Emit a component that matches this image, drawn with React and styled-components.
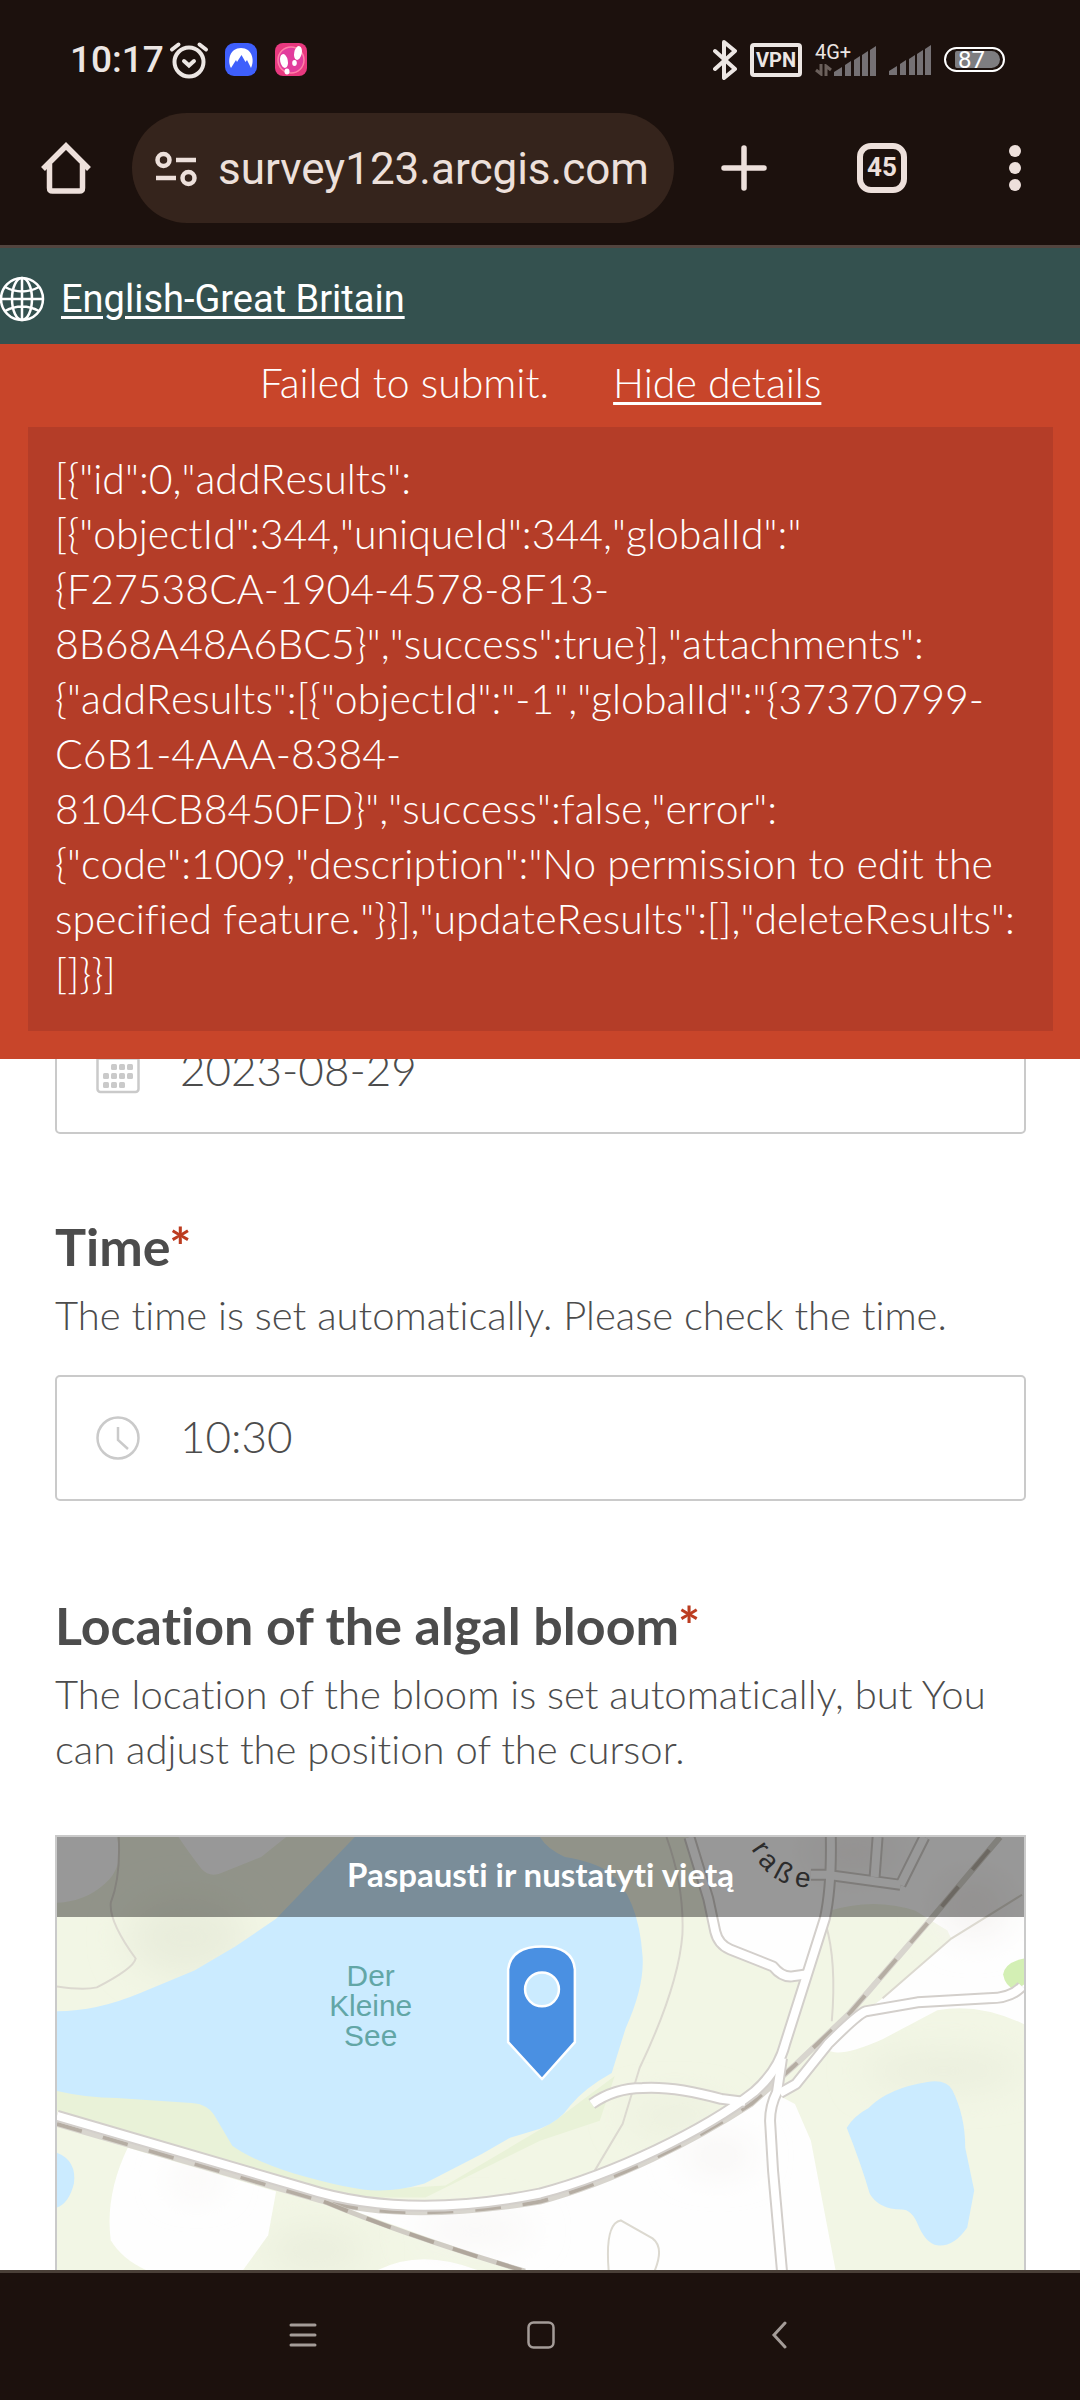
import React, { useState } from "react";
import styled, { createGlobalStyle } from "styled-components";

const colors = {
  chrome: "#1c110d",
  pill: "#35241c",
  chromeInk: "#ede0db",
  teal: "#34514f",
  error: "#c8452a",
  errorDark: "#b43d28",
  ink: "#4c4c4c",
  line: "#cacaca",
};

const GlobalStyle = createGlobalStyle`
  *, *::before, *::after { box-sizing: border-box; }
  body { margin: 0; background: #fff; }
  button { border: 0; padding: 0; background: none; color: inherit; font: inherit; cursor: pointer; }
`;

const Page = styled.div`
  display: flex;
  flex-direction: column;
  min-height: 100vh;
  color: ${colors.ink};
  font-family: Lato, "Open Sans", sans-serif;
  font-weight: 300;
  font-size: 40px;
  line-height: 55px;
  font-variant-ligatures: none;
`;

/* ---------- system and browser chrome ---------- */

const StatusBar = styled.header`
  display: flex;
  justify-content: space-between;
  align-items: center;
  height: 113px;
  padding: 6px 75px 0 70px;
  background: ${colors.chrome};
  color: #ece6e3;
  font-family: Roboto, sans-serif;
`;

const StatusGroup = styled.div`
  display: flex;
  align-items: center;
  gap: ${(p) => p.$gap}px;
`;

const Clock = styled.time`
  font-size: 37px;
  font-weight: 500;
  line-height: 40px;
`;

const VpnBadge = styled.span`
  width: 52px;
  height: 34px;
  border: 4px solid #ece6e3;
  border-radius: 4px;
  font-size: 20px;
  font-weight: 700;
  line-height: 27px;
  text-align: center;
`;

const Network = styled.div`
  display: flex;
  align-items: flex-end;
`;

const NetworkType = styled.div`
  display: flex;
  flex-direction: column;
  gap: 4px;
  width: 19px;
  font-size: 20px;
  font-weight: 400;
  line-height: 16px;
  white-space: nowrap;
`;

const Battery = styled.span`
  width: 61px;
  height: 25px;
  padding: 2px 3px 2px 9px;
  border: 2px solid #fff;
  border-radius: 13px;
`;

const BatteryLevel = styled.span`
  display: block;
  height: 17px;
  padding-left: 3px;
  border-radius: 2px 9px 9px 2px;
  background: #7e7d80;
  color: #fff;
  font-size: 24px;
  font-weight: 400;
  line-height: 18px;
`;

const Toolbar = styled.nav`
  display: flex;
  align-items: flex-start;
  height: 135px;
  border-bottom: 3px solid #52453f;
  background: ${colors.chrome};
  color: ${colors.chromeInk};
  font-family: Roboto, sans-serif;
`;

const ToolButton = styled.button`
  display: flex;
  flex: none;
  align-items: center;
  justify-content: center;
  width: ${(p) => p.$width}px;
  height: 110px;
`;

const AddressPill = styled.div`
  display: flex;
  flex: 1;
  align-items: center;
  gap: 21px;
  min-width: 0;
  height: 110px;
  padding: 2px 16px 0 23px;
  border-radius: 55px;
  background: ${colors.pill};
`;

const AddressInput = styled.input`
  flex: 1;
  min-width: 0;
  height: 60px;
  padding: 0;
  border: 0;
  outline: 0;
  background: none;
  color: ${colors.chromeInk};
  font-family: Roboto, sans-serif;
  font-size: 44px;
`;

const TabCount = styled.span`
  width: 50px;
  height: 50px;
  border: 6px solid ${colors.chromeInk};
  border-radius: 14px;
  font-size: 26px;
  font-weight: 700;
  line-height: 37px;
  text-align: center;
`;

const NavBar = styled.nav`
  display: grid;
  grid-template-columns: repeat(3, 1fr);
  height: 130px;
  padding: 0 182px 4px 184px;
  border-top: 3px solid #4a4038;
  background: ${colors.chrome};
  color: #a49c98;
`;

const NavButton = styled.button`
  display: flex;
  align-items: center;
  justify-content: center;
`;

/* ---------- survey page ---------- */

const LanguageBar = styled.div`
  display: flex;
  align-items: center;
  gap: 16px;
  height: 96px;
  padding-top: 6px;
  background: ${colors.teal};
  color: #fff;
`;

const LanguageLink = styled.a`
  color: #fff;
  font-family: Roboto, sans-serif;
  font-size: 38px;
  font-weight: 400;
  line-height: 48px;
  text-underline-offset: 4px;
`;

const ErrorBanner = styled.section`
  padding: 0 27px 28px 28px;
  background: ${colors.error};
  color: #fff;
  font-size: 41px;
`;

const ErrorHeader = styled.div`
  display: flex;
  justify-content: center;
  gap: 64px;
  padding: 11px 0 17px;
`;

const DetailsToggle = styled.button`
  text-decoration: underline;
  text-decoration-thickness: 3px;
  text-underline-offset: 4px;
`;

const ErrorDetails = styled.div`
  padding: 24px 27px 30px;
  background: ${colors.errorDark};
  font-kerning: none;
  white-space: pre-line;
`;

const Form = styled.form`
  display: flex;
  flex: 1;
  flex-direction: column;
  padding: 0 54px 0 55px;
`;

const ScrolledField = styled.div`
  display: flex;
  flex-direction: column;
  justify-content: flex-end;
  height: 75px;
  overflow: hidden;
`;

const Field = styled.div`
  display: flex;
  flex: none;
  align-items: center;
  gap: 40px;
  height: 126px;
  padding: 0 39px;
  border: 2px solid ${colors.line};
  border-radius: 5px;
`;

const FieldInput = styled.input`
  flex: 1;
  min-width: 0;
  height: 60px;
  padding: 0 0 4px;
  border: 0;
  outline: 0;
  background: none;
  color: ${colors.ink};
  font-family: inherit;
  font-size: 44px;
  font-weight: 300;
`;

const Question = styled.section`
  display: flex;
  flex-direction: column;
  padding-top: ${(p) => p.$top}px;
  ${(p) => p.$fill && "flex: 1;"}
`;

const QuestionLabel = styled.label`
  margin: 0;
  font-size: 52px;
  font-weight: 700;
  line-height: 60px;
`;

const Required = styled.span`
  color: #bc3c20;
`;

const Hint = styled.p`
  margin: 12px 0 ${(p) => p.$bottom}px;
  white-space: pre-line;
`;

const MapFrame = styled.div`
  position: relative;
  flex: 1;
  min-height: 435px;
  border: 2px solid ${colors.line};
  border-bottom: 0;
  overflow: hidden;
`;

const MapDrawing = styled.svg`
  position: absolute;
  inset: 0;
  width: 100%;
  height: 100%;
`;

const MapPrompt = styled.button`
  position: absolute;
  inset: -2px -2px auto;
  height: 82px;
  padding-bottom: 4px;
  background: rgba(0, 0, 0, 0.4);
  color: #fff;
  font-size: 33px;
  font-weight: 700;
`;

/* ---------- drawings ---------- */

const AlarmIcon = () => (
  <svg width="40" height="38" viewBox="0 0 40 38" fill="none" stroke="#ece6e3" strokeWidth="4" strokeLinecap="round">
    <circle cx="20" cy="21" r="14.5" />
    <path d="M15 20l5 4.500 5-4.500M3 8.500L9.500 3.500M37 8.500L30.500 3.500" />
  </svg>
);

const NordIcon = () => (
  <svg width="32" height="33" viewBox="0 0 32 33">
    <rect width="32" height="33" rx="9" fill="#3e5ffc" />
    <path d="M6 25C2 17 5 5 16 5s14 12 10 20l-4-8-1.500 2-4-7-4.500 7-1-2z" fill="#fff" />
  </svg>
);

const StepsIcon = () => (
  <svg width="32" height="33" viewBox="0 0 32 33">
    <rect width="32" height="33" rx="8" fill="#e8397f" />
    <circle cx="16" cy="17" r="13" fill="#e23c9c" stroke="#ff7fa8" strokeWidth="1.500" />
    <g fill="#fff">
      <ellipse cx="9" cy="18" rx="3.800" ry="7" transform="rotate(-12 9 18)" />
      <ellipse cx="12" cy="28.500" rx="2.500" ry="3" />
      <ellipse cx="23" cy="10" rx="3.800" ry="7" transform="rotate(12 23 10)" />
      <ellipse cx="19.500" cy="20" rx="2.300" ry="3" />
    </g>
  </svg>
);

const BluetoothIcon = () => (
  <svg width="24" height="40" viewBox="0 0 24 40" fill="none" stroke="#ece6e3" strokeWidth="4" strokeLinecap="round" strokeLinejoin="round">
    <path d="M2 11l20 18-11 9V2l11 9L2 29" />
  </svg>
);

const TransferIcon = () => (
  <svg width="17" height="12" viewBox="0 0 17 12" fill="none" stroke="#6b605b" strokeWidth="3">
    <path d="M6 0v10L1 6M11 12V2l5 4" />
  </svg>
);

const SignalIcon = () => (
  <svg width="42" height="30" viewBox="0 0 42 30" fill="#757174">
    <path d="M0 30v-4l8-5v9zM11 30V19l6-4v15zM20 30V14l6-4v20zM28 30V9l6-4v25zM36 30V4l6-4v30z" />
  </svg>
);

const HomeIcon = () => (
  <svg width="50" height="52" viewBox="0 0 50 52" fill="none" stroke={colors.chromeInk} strokeWidth="5.500" strokeLinejoin="round">
    <path d="M2 27L25 4l23 23" strokeLinejoin="miter" />
    <path d="M8.500 22v24q0 3 3 3h27q3 0 3-3V22" />
  </svg>
);

const SiteInfoIcon = () => (
  <svg width="42" height="36" viewBox="0 0 42 36" fill="none" stroke={colors.chromeInk} strokeWidth="4.500">
    <circle cx="8.500" cy="9" r="6" />
    <circle cx="33.500" cy="27" r="6" />
    <path d="M21 9h20M1 27h20" />
  </svg>
);

const PlusIcon = () => (
  <svg width="46" height="46" viewBox="0 0 46 46" stroke={colors.chromeInk} strokeWidth="5.500" strokeLinecap="round">
    <path d="M23 3v40M3 23h40" />
  </svg>
);

const DotsIcon = () => (
  <svg width="12" height="46" viewBox="0 0 12 46" fill={colors.chromeInk}>
    <circle cx="6" cy="6" r="6" />
    <circle cx="6" cy="23" r="6" />
    <circle cx="6" cy="40" r="6" />
  </svg>
);

const GlobeIcon = () => (
  <svg width="45" height="46" viewBox="0 0 45 46" fill="none" stroke="#fff" strokeWidth="2.500">
    <circle cx="22" cy="23" r="21" />
    <ellipse cx="22" cy="23" rx="10" ry="21" />
    <path d="M22 2v42M1 23h42M5 11q17 9 34 0M5 35q17-9 34 0" />
  </svg>
);

const CalendarIcon = () => (
  <svg width="44" height="46" viewBox="0 0 44 46" fill="none" stroke={colors.line} strokeWidth="2.500">
    <rect x="1.500" y="3" width="41" height="41" rx="3" />
    <path d="M1 10.500h42" />
    <g fill={colors.line} stroke="none">
      {[[15, 16], [23, 16], [31, 16], [7, 25], [15, 25], [23, 25], [31, 25], [7, 34], [15, 34], [23, 34]].map(([x, y]) => (
        <rect key={`${x}-${y}`} x={x} y={y} width="6" height="6" rx="1.500" />
      ))}
    </g>
  </svg>
);

const ClockIcon = () => (
  <svg width="44" height="44" viewBox="0 0 44 44" fill="none" stroke={colors.line} strokeWidth="2.500">
    <circle cx="22" cy="22" r="20.500" />
    <path d="M22 11v13l10 9" />
  </svg>
);

const roads = [
  "M757 38L774 38L847 48M821 40L824 0M847 48L871 0",
  "M635 0L654 62L661 95Q664 108 676 113L719 130Q728 141 738 140L752 138",
  "M537 268Q560 252 588 252Q620 250 667 263L691 266",
  "M969 150Q958 162 935 162L864 166L812 175Q804 178 774 208L742 248L726 257",
  "M0 280L250 353Q350 385 485 358C560 338 650 295 700 256Q724 235 731 208L771 82Q778 50 777 0",
  "M728 222L723 256Q716 270 716 285L719 335L728 436",
];

const lines = [
  "M62 0Q64 40 54 66Q52 85 79 122Q77 132 40 151Q26 154 0 150",
  "M612 0Q630 50 628 98Q624 150 585 232L568 288L540 335",
  "M772 88Q783 125 778 185",
  "M969 58L898 102L829 162",
  "M554 436Q550 388 566 385L598 403Q610 412 600 436",
];

const railway =
  "M0 288L265 365Q350 388 485 366C560 346 640 305 697 268L740 230L795 178L878 82L947 0";

const BaseMap = () => (
  <MapDrawing viewBox="0 0 971 435" preserveAspectRatio="xMidYMin slice" role="img" aria-label="Map">
    <defs>
      <filter id="shade" x="-50%" y="-50%" width="200%" height="200%">
        <feGaussianBlur stdDeviation="18" />
      </filter>
    </defs>
    <rect width="971" height="435" fill="#f2f6e5" />
    <g fill="#e9eddc" filter="url(#shade)">
      <ellipse cx="130" cy="100" rx="60" ry="40" />
      <ellipse cx="890" cy="235" rx="80" ry="16" />
      <ellipse cx="260" cy="415" rx="50" ry="20" />
      <ellipse cx="620" cy="280" rx="50" ry="12" />
    </g>
    <g fill="#fefefe">
      <path d="M0 0H60Q68 30 48 47Q28 65 0 66Z" />
      <path d="M122 0Q132 15 145 32Q154 42 168 35L205 20L230 0Z" />
      <path d="M71 312Q48 360 54 405Q66 425 92 436H186L212 400L220 356Z" />
      <path d="M320 436Q365 412 425 436Z" />
      <path d="M272 366Q370 386 485 363C580 335 660 290 716 255L741 268L757 305L782 436H468Z" />
      <path d="M636 0L661 95L671 112L733 140L752 138L772 75Q820 60 862 74L894 94L898 102L829 162L800 182L774 214Q786 222 829 203L884 174Q925 166 971 188V0Z" />
    </g>
    <path d="M772 85Q820 62 868 80L894 94L896 104L829 162L760 212L742 222L750 160Z" fill="#f2f6e5" />
    <g fill="#f5f3f1" filter="url(#shade)">
      <ellipse cx="920" cy="70" rx="36" ry="30" />
      <ellipse cx="420" cy="395" rx="60" ry="10" />
      <ellipse cx="665" cy="320" rx="36" ry="14" />
      <ellipse cx="800" cy="15" rx="50" ry="22" />
      <ellipse cx="140" cy="345" rx="25" ry="10" />
    </g>
    <path d="M0 255L155 262L240 330L320 354L390 350L500 285L560 240L545 285L485 305L370 362H275L0 275Z" fill="#e9f2d8" />
    <g fill="#cbebff">
      <path d="M299 0L220 82L179 110L138 134L83 157Q40 175 0 175V255Q30 262 60 262L135 267Q153 268 160 283L176 310Q195 324 238 338Q300 356 324 355Q345 355 369 348L427 318L455 302L485 293Q505 285 515 270Q530 252 557 237L571 192Q590 150 588 120Q584 60 554 35Q540 25 510 20Q492 12 485 0Z" />
      <path d="M0 317Q20 325 17 348Q12 368 0 372Z" />
      <path d="M793 292Q800 280 815 272Q835 252 874 246Q893 243 899 254Q912 280 912 312L921 355L914 392Q900 412 884 410Q872 408 864 388Q858 374 848 374Q825 374 816 358Q808 330 793 292Z" />
    </g>
    <path d="M971 122Q952 126 950 138Q952 150 963 154L971 148Z" fill="#d3efb4" />
    <g fill="none" stroke="#dcd9d0" strokeWidth="2">
      {lines.map((d) => <path key={d} d={d} />)}
    </g>
    <g fill="none" strokeLinejoin="round">
      <path d={railway} stroke="#d8d5ce" strokeWidth="6" />
      <path d={railway} stroke="#b5ada3" strokeWidth="4" strokeDasharray="26 22" />
      <path d="M268 366Q350 400 470 436" stroke="#d0ccc4" strokeWidth="5" />
      <path d="M268 366Q350 400 470 436" stroke="#b0a79c" strokeWidth="4" strokeDasharray="26 20" />
      {roads.map((d) => <path key={d} d={d} stroke="#d3cfcb" strokeWidth="12" />)}
      {roads.map((d) => <path key={d} d={d} stroke="#fff" strokeWidth="8" />)}
    </g>
    <g fill="#62a6a6" fontFamily="Liberation Sans, Arial, sans-serif" fontSize="30" fontWeight="400" textAnchor="middle">
      <text x="315" y="150">Der</text>
      <text x="315" y="180">Kleine</text>
      <text x="315" y="210">See</text>
    </g>
    <text
      x="697 703 718 740"
      y="12 24 40 49"
      rotate="56 48 28 8"
      fill="#4a4a4a"
      fontFamily="Liberation Sans, Arial, sans-serif"
      fontSize="28"
      fontWeight="400"
    >
      raße
    </text>
    <path
      fillRule="evenodd"
      d="M453 133Q456 110 487 110T520 133V206L487 243L453 206ZM487 136A17 17 0 1 0 487 170A17 17 0 1 0 487 136Z"
      fill="#4a90e2"
      stroke="#fff"
      strokeWidth="2.500"
    />
  </MapDrawing>
);

const errorText = `[{"id":0,"addResults":
[{"objectId":344,"uniqueId":344,"globalId":"
{F27538CA-1904-4578-8F13-
8B68A48A6BC5}","success":true}],"attachments":
{"addResults":[{"objectId":"-1","globalId":"{37370799-
C6B1-4AAA-8384-
8104CB8450FD}","success":false,"error":
{"code":1009,"description":"No permission to edit the
specified feature."}}],"updateResults":[],"deleteResults":
[]}}]`;

export default function App() {
  const [open, setOpen] = useState(true);
  const [date, setDate] = useState("2023-08-29");
  const [time, setTime] = useState("10:30");

  return (
    <Page>
      <GlobalStyle />
      <StatusBar>
        <StatusGroup $gap={16}>
          <StatusGroup $gap={5}>
            <Clock>10:17</Clock>
            <AlarmIcon />
          </StatusGroup>
          <StatusGroup $gap={18}>
            <NordIcon />
            <StepsIcon />
          </StatusGroup>
        </StatusGroup>
        <StatusGroup $gap={13}>
          <BluetoothIcon />
          <VpnBadge>VPN</VpnBadge>
          <Network>
            <NetworkType>
              4G+
              <TransferIcon />
            </NetworkType>
            <SignalIcon />
          </Network>
          <SignalIcon />
          <Battery>
            <BatteryLevel>87</BatteryLevel>
          </Battery>
        </StatusGroup>
      </StatusBar>

      <Toolbar aria-label="Browser">
        <ToolButton $width={132} aria-label="Home"><HomeIcon /></ToolButton>
        <AddressPill>
          <SiteInfoIcon />
          <AddressInput aria-label="Address" defaultValue="survey123.arcgis.com" />
        </AddressPill>
        <ToolButton $width={140} aria-label="New tab"><PlusIcon /></ToolButton>
        <ToolButton $width={136} aria-label="Tabs"><TabCount>45</TabCount></ToolButton>
        <ToolButton $width={130} aria-label="Menu"><DotsIcon /></ToolButton>
      </Toolbar>

      <LanguageBar>
        <GlobeIcon />
        <LanguageLink href="#language">English-Great Britain</LanguageLink>
      </LanguageBar>

      <ErrorBanner role="alert">
        <ErrorHeader>
          <span>Failed to submit.</span>
          <DetailsToggle onClick={() => setOpen(!open)}>{open ? "Hide details" : "Show details"}</DetailsToggle>
        </ErrorHeader>
        {open && <ErrorDetails>{errorText}</ErrorDetails>}
      </ErrorBanner>

      <Form onSubmit={(e) => e.preventDefault()}>
        <ScrolledField>
          <Field>
            <CalendarIcon />
            <FieldInput aria-label="Date" value={date} onChange={(e) => setDate(e.target.value)} />
          </Field>
        </ScrolledField>

        <Question $top={82}>
          <QuestionLabel htmlFor="time">Time<Required>*</Required></QuestionLabel>
          <Hint $bottom={32}>The time is set automatically. Please check the time.</Hint>
          <Field>
            <ClockIcon />
            <FieldInput id="time" value={time} onChange={(e) => setTime(e.target.value)} />
          </Field>
        </Question>

        <Question $top={94} $fill>
          <QuestionLabel as="h2">Location of the algal bloom<Required>*</Required></QuestionLabel>
          <Hint $bottom={58}>
            {"The location of the bloom is set automatically, but You\ncan adjust the position of the cursor."}
          </Hint>
          <MapFrame>
            <BaseMap />
            <MapPrompt type="button">Paspausti ir nustatyti vietą</MapPrompt>
          </MapFrame>
        </Question>
      </Form>

      <NavBar aria-label="System">
        <NavButton aria-label="Recent apps">
          <svg width="28" height="24" viewBox="0 0 28 24" stroke="currentColor" strokeWidth="3" strokeLinecap="round">
            <path d="M2 2h24M2 12h24M2 22h24" />
          </svg>
        </NavButton>
        <NavButton aria-label="Home screen">
          <svg width="28" height="28" viewBox="0 0 28 28" fill="none" stroke="currentColor" strokeWidth="2.500">
            <rect x="1.500" y="1.500" width="25" height="25" rx="5" />
          </svg>
        </NavButton>
        <NavButton aria-label="Back">
          <svg width="16" height="28" viewBox="0 0 16 28" fill="none" stroke="currentColor" strokeWidth="3" strokeLinecap="round">
            <path d="M14 2L3 14l11 12" />
          </svg>
        </NavButton>
      </NavBar>
    </Page>
  );
}
